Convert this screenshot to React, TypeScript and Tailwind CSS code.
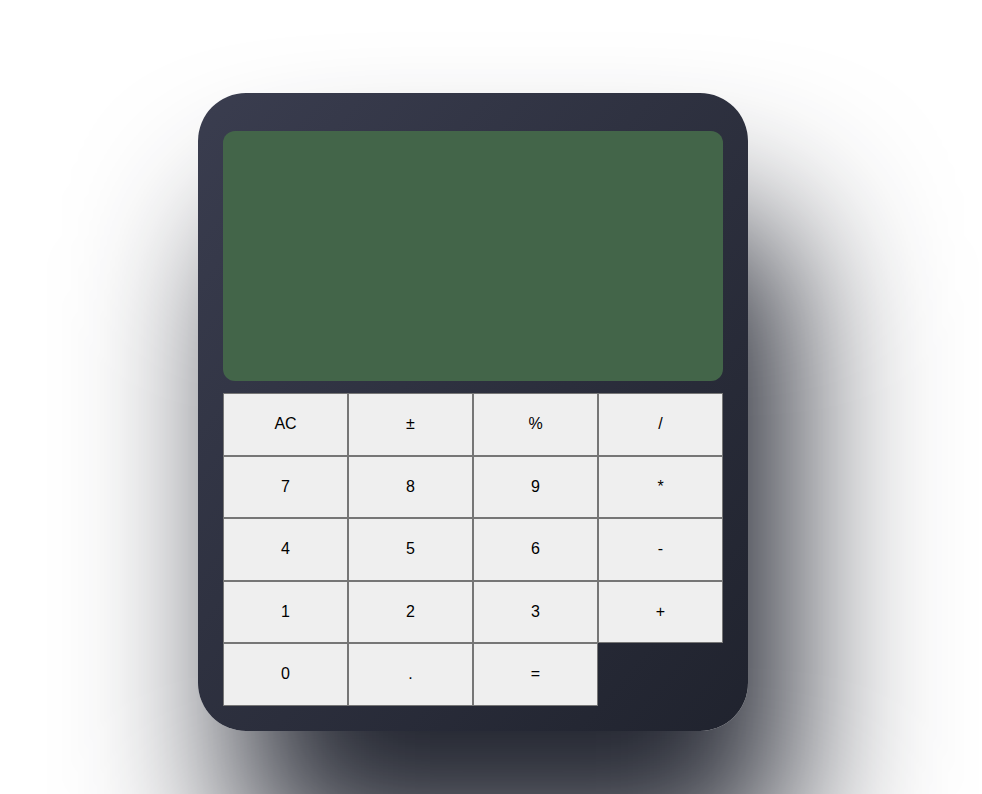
import React from 'react';

const keys = ['AC', '±', '%', '/', '7', '8', '9', '*', '4', '5', '6', '-', '1', '2', '3', '+', '0', '.', '='];

export default function App() {
  return (
    <div className="w-[982px] h-[794px] bg-white overflow-hidden font-['Liberation_Sans',Arial,sans-serif]">
      <div className="pt-[93px] pl-[198px]">
        <div className="w-[550px] h-[638px] rounded-[48px] bg-gradient-to-br from-[#3a3d4f] to-[#20232e] shadow-[40px_130px_160px_0_rgba(32,35,46,1)] px-[25px] pt-[38px]">
          <div className="h-[250px] rounded-[12px] bg-[#436549]" />
          <div className="mt-[12px] grid grid-cols-4 auto-rows-[62.5px]">
            {keys.map((k) => (
              <button
                key={k}
                className="bg-[#efefef] border border-[#767676] text-[16px] text-black flex items-center justify-center"
              >
                {k}
              </button>
            ))}
          </div>
        </div>
      </div>
    </div>
  );
}
